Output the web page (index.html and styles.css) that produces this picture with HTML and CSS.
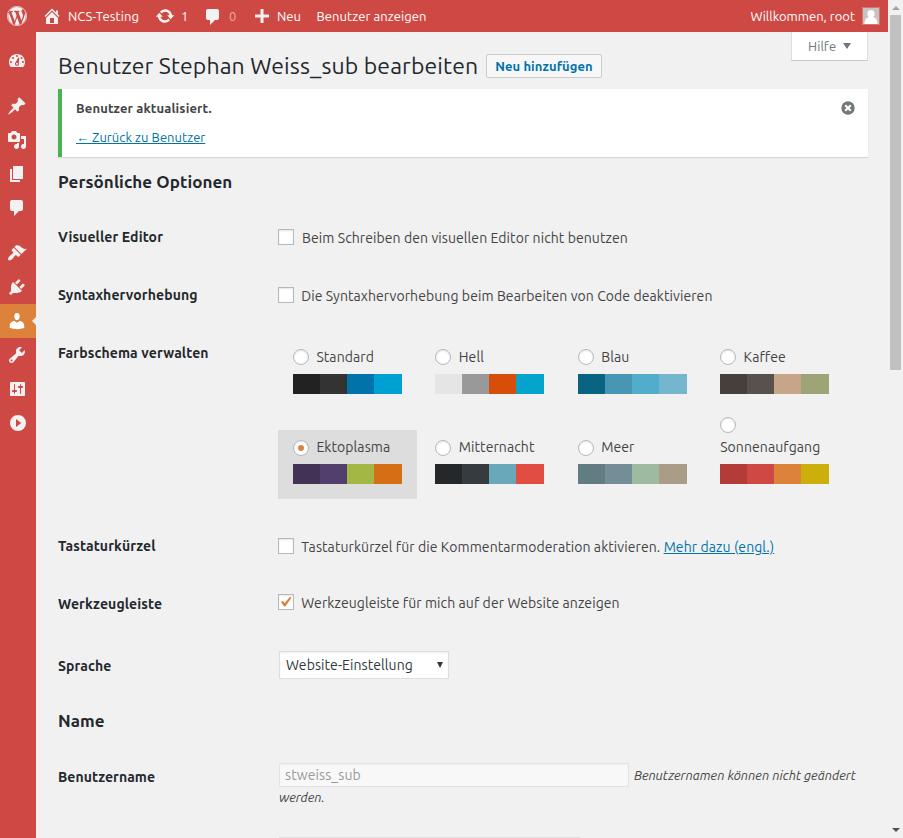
FILE: index.html
```html
<!DOCTYPE html>
<html lang="de">
<head>
<meta charset="utf-8">
<title>Benutzer bearbeiten</title>
<link rel="stylesheet" href="styles.css">
</head>
<body>
<div class="page">
<div class="app">
  <header class="bar">
    <svg class="icon wp" viewBox="0 0 20 20"><circle class="ring" cx="10" cy="10" r="9.650"/><path d="M7.78 15.37L4.37 6.22c.55-.02 1.17-.08 1.17-.08.5-.06.44-1.13-.06-1.11 0 0-1.45.11-2.37.11-.18 0-.37 0-.58-.01C4.12 2.69 6.87 1.11 10 1.11c2.33 0 4.45.87 6.05 2.34-.68-.11-1.65.39-1.65 1.58 0 .74.45 1.36.9 2.1.35.61.55 1.36.55 2.46 0 1.49-1.4 5-1.4 5l-3.03-8.37c.54-.02.82-.17.82-.17.5-.05.44-1.25-.06-1.22 0 0-1.44.12-2.38.12-.87 0-2.33-.12-2.33-.12-.5-.03-.56 1.2-.06 1.22l.92.08 1.26 3.41zM17.41 10c.24-.64.74-1.87.43-4.25.7 1.29 1.05 2.71 1.05 4.25 0 3.29-1.73 6.24-4.4 7.78.97-2.59 1.94-5.2 2.92-7.78zM6.1 18.09C3.12 16.65 1.11 13.53 1.11 10c0-1.3.23-2.48.72-3.59C3.25 10.3 4.67 14.2 6.1 18.09zm4.03-6.63l2.58 6.98c-.86.29-1.76.45-2.71.45-.79 0-1.57-.11-2.29-.33.81-2.38 1.62-4.74 2.42-7.1z"/></svg>
    <a class="site"><svg class="icon" viewBox="0 0 20 20"><path d="M16 8.5l1.53 1.53-1.06 1.06L10 4.6l-6.47 6.49-1.06-1.06L10 2.5l4 4v-2h2v4zm-6-2.46l6 5.99V18H4v-5.97zM12 17v-5H8v5h4z"/></svg><span>NCS-Testing</span></a>
    <a class="updates"><svg class="icon" viewBox="0 0 20 20"><path d="M10.2 3.28c3.53 0 6.43 2.61 6.92 6h2.08l-3.5 4-3.5-4h2.32c-.45-1.97-2.21-3.45-4.32-3.45-1.45 0-2.73.71-3.54 1.78L4.95 5.66C6.23 4.2 8.11 3.28 10.2 3.28zm-.4 13.44c-3.52 0-6.43-2.61-6.92-6H.8l3.5-4c1.17 1.33 2.33 2.67 3.5 4H5.48c.45 1.97 2.21 3.45 4.32 3.45 1.45 0 2.73-.71 3.54-1.78l1.71 1.95c-1.28 1.46-3.15 2.38-5.25 2.38z"/></svg><span>1</span></a>
    <a class="comments"><svg class="icon" viewBox="0 0 20 20"><path d="M5 2h9c1.1 0 2 .9 2 2v7c0 1.1-.9 2-2 2h-2l-5 5v-5H5c-1.1 0-2-.9-2-2V4c0-1.1.9-2 2-2z"/></svg><span class="faded">0</span></a>
    <a class="new"><svg class="icon" viewBox="0 0 20 20"><path d="M17 8.5v3h-5.500v5.500h-3v-5.500H3v-3h5.500V3h3v5.500z"/></svg><span>Neu</span></a>
    <a class="view">Benutzer anzeigen</a>
    <a class="account"><span>Willkommen, root</span><svg class="avatar" viewBox="0 0 18 18"><path class="avatar-bg" d="M0 0h18v18H0z"/><path class="avatar-edge" d="M.5.5h17v17H.5z"/><path class="avatar-person" d="M9 3c2.300 0 3.600 1.600 3.600 3.700 0 1.500-.5 2.700-1.300 3.500 2.500.6 4 2 4.200 6.800H2.500c.2-4.800 1.700-6.200 4.200-6.800-.8-.8-1.300-2-1.300-3.500C5.400 4.600 6.700 3 9 3z"/></svg></a>
  </header>
  <div class="body">
    <nav class="menu">
      <a class="dashboard"><svg class="icon" viewBox="0 0 20 20"><path fill-rule="evenodd" d="M3.760 17h12.480c1.100-1.370 1.760-3.110 1.760-5 0-4.420-3.580-8-8-8s-8 3.580-8 8c0 1.890.66 3.630 1.760 5zM9 6a1 1 0 1 1 2 0 1 1 0 0 1-2 0zM5 8a1 1 0 1 1 2 0 1 1 0 0 1-2 0zm8.500 0a1 1 0 1 1 2 0 1 1 0 0 1-2 0zM3 12a1 1 0 1 1 2 0 1 1 0 0 1-2 0zm12 0a1 1 0 1 1 2 0 1 1 0 0 1-2 0zM11.400 7.500l.9.300-.5 5.100c.8 1.400-.2 2.900-1.800 2.900-1.700 0-2.700-1.800-1.700-3.100zM10 12.800a1 1 0 1 0 0 2 1 1 0 0 0 0-2z"/></svg></a>
      <a class="group"><svg class="icon" viewBox="0 0 20 20"><path d="M10.440 3.020l1.820-1.820 6.360 6.350-1.830 1.820c-1.050-.68-2.480-.57-3.410.36l-.75.75c-.92.93-1.040 2.350-.35 3.410l-1.830 1.820-2.410-2.410-2.800 2.790c-.42.42-3.380 2.710-3.800 2.290s1.860-3.390 2.280-3.810l2.790-2.790L4.100 9.360l1.830-1.820c1.050.69 2.480.57 3.400-.36l.75-.75c.93-.92 1.050-2.350.36-3.410z"/></svg></a>
      <a><svg class="icon" viewBox="0 0 20 20"><path d="M13 11V4c0-.55-.45-1-1-1h-1.670L9 1H5L3.670 3H2c-.55 0-1 .45-1 1v7c0 .55.45 1 1 1h10c.55 0 1-.45 1-1zM7 4.500c1.380 0 2.500 1.120 2.500 2.500S8.380 9.500 7 9.500 4.500 8.380 4.500 7 5.620 4.500 7 4.500zM14 6h5v10.500c0 1.380-1.120 2.500-2.500 2.500S14 17.880 14 16.500s1.120-2.500 2.500-2.500c.17 0 .34.02.5.05V9h-3V6zm-4 8.050V13h2v3.500c0 1.380-1.120 2.500-2.500 2.500S7 17.880 7 16.500 8.120 14 9.500 14c.17 0 .34.02.5.05z"/></svg></a>
      <a><svg class="icon" viewBox="0 0 20 20"><path d="M6 15V2h10v13H6zm-1 1h8v2H3V5h2v11z"/></svg></a>
      <a><svg class="icon" viewBox="0 0 20 20"><path d="M5 2h9c1.100 0 2 .9 2 2v7c0 1.100-.9 2-2 2h-2l-5 5v-5H5c-1.100 0-2-.9-2-2V4c0-1.100.9-2 2-2z"/></svg></a>
      <a class="group"><svg class="icon" viewBox="0 0 20 20"><path d="M14.480 11.060L7.410 3.990l1.500-1.500c.5-.56 2.300-.47 3.510.32 1.210.8 1.430 1.280 2.910 2.100 1.180.64 2.450 1.260 4.450.85zm-.71.71L6.700 4.700 4.930 6.470c-.39.39-.39 1.020 0 1.410l1.060 1.060c.39.39.39 1.030 0 1.420-.6.6-1.430 1.110-2.210 1.690-.35.26-.7.53-1.010.84C1.430 14.230.4 16.080 1.400 17.070c.99 1 2.840-.03 4.180-1.360.31-.31.58-.66.85-1.020.57-.78 1.080-1.610 1.690-2.210.39-.39 1.020-.39 1.410 0l1.060 1.060c.39.39 1.020.39 1.410 0z"/></svg></a>
      <a><svg class="icon" viewBox="0 0 20 20"><path d="M13.110 4.360L9.870 7.600 8 5.730l3.240-3.240c.35-.34 1.050-.2 1.560.32.52.51.66 1.210.31 1.550zm-8 1.770l.91-1.120 9.010 9.010-1.190.84c-.71.71-2.630 1.160-3.820 1.160H6.140L4.900 17.260c-.59.59-1.540.59-2.120 0-.59-.58-.59-1.530 0-2.120l1.240-1.240v-3.880c0-1.130.4-3.190 1.090-3.890zm7.260 3.970l3.240-3.240c.34-.35 1.040-.21 1.550.31.52.51.66 1.210.31 1.550l-3.240 3.250z"/></svg></a>
      <a class="current"><svg class="icon" viewBox="0 0 20 20"><path d="M10 9.250c-2.270 0-2.730-3.440-2.730-3.440C7 4.020 7.820 2 9.970 2c2.160 0 2.980 2.020 2.710 3.810 0 0-.41 3.440-2.680 3.440zm0 2.570L12.720 10c2.390 0 4.520 2.330 4.520 4.530v2.490s-3.650 1.130-7.240 1.130c-3.650 0-7.240-1.130-7.240-1.130v-2.490c0-2.250 1.940-4.480 4.470-4.480z"/></svg></a>
      <a><svg class="icon" viewBox="0 0 20 20"><path d="M16.680 9.770c-1.340 1.340-3.300 1.670-4.950.99l-5.410 6.520c-.99.99-2.590.99-3.580 0s-.99-2.590 0-3.570l6.520-5.420c-.68-1.650-.35-3.610.99-4.950 1.280-1.280 3.120-1.620 4.720-1.060l-2.890 2.890 2.820 2.820 2.860-2.870c.53 1.580.18 3.390-1.080 4.650zM3.810 16.210c.4.39 1.040.39 1.430 0 .4-.4.4-1.040 0-1.430-.39-.4-1.030-.4-1.430 0-.39.39-.39 1.030 0 1.430z"/></svg></a>
      <a><svg class="icon" viewBox="0 0 20 20"><path fill-rule="evenodd" d="M18 16V4c0-.55-.45-1-1-1H4c-.55 0-1 .45-1 1v12c0 .55.45 1 1 1h13c.55 0 1-.45 1-1zM8 11h1c.55 0 1 .45 1 1s-.45 1-1 1H8v1.500c0 .28-.22.5-.5.5s-.5-.22-.5-.5V13H6c-.55 0-1-.45-1-1s.45-1 1-1h1V5.500c0-.28.22-.5.5-.5s.5.22.5.5V11zm5-2h-1c-.55 0-1-.45-1-1s.45-1 1-1h1V5.500c0-.28.22-.5.5-.5s.5.22.5.5V7h1c.55 0 1 .45 1 1s-.45 1-1 1h-1v5.500c0 .28-.22.5-.5.5s-.5-.22-.5-.5V9z"/></svg></a>
      <a><svg class="icon" viewBox="0 0 20 20"><path fill-rule="evenodd" d="M11 2a8 8 0 1 1 0 16 8 8 0 0 1 0-16zM9 6v8l5.300-4z"/></svg></a>
    </nav>
    <main class="content">
      <div class="heading">
        <h1>Benutzer Stephan Weiss_sub bearbeiten</h1>
        <a class="add">Neu hinzufügen</a>
        <a class="help"><span>Hilfe</span><i class="tri"></i></a>
      </div>
      <div class="notice">
        <div><strong>Benutzer aktualisiert.</strong><a class="link">← Zurück zu Benutzer</a></div>
        <svg class="dismiss" viewBox="0 0 14 14"><circle cx="7" cy="7" r="6.700"/><path d="M4.200 4.200l5.600 5.600M9.800 4.200l-5.600 5.600"/></svg>
      </div>
      <h2>Persönliche Optionen</h2>
      <div class="row"><b class="label">Visueller Editor</b><label class="opt wide"><i class="box"></i><span>Beim Schreiben den visuellen Editor nicht benutzen</span></label></div>
      <div class="row"><b class="label">Syntaxhervorhebung</b><label class="opt"><i class="box"></i><span>Die Syntaxhervorhebung beim Bearbeiten von Code deaktivieren</span></label></div>
      <div class="row colors"><b class="label">Farbschema verwalten</b>
        <div class="schemes">
          <div class="scheme"><label><i class="radio"></i><span>Standard</span></label><div class="palette"><i class="c-222"></i><i class="c-333"></i><i class="c-0073aa"></i><i class="c-00a0d2"></i></div></div>
          <div class="scheme"><label><i class="radio"></i><span>Hell</span></label><div class="palette"><i class="c-e5"></i><i class="c-999"></i><i class="c-d64e07"></i><i class="c-04a4cc"></i></div></div>
          <div class="scheme"><label><i class="radio"></i><span>Blau</span></label><div class="palette"><i class="c-096484"></i><i class="c-4796b3"></i><i class="c-52accc"></i><i class="c-74b6ce"></i></div></div>
          <div class="scheme"><label><i class="radio"></i><span>Kaffee</span></label><div class="palette"><i class="c-46403c"></i><i class="c-59524c"></i><i class="c-c7a589"></i><i class="c-9ea476"></i></div></div>
          <div class="scheme lower selected"><label><i class="radio on"></i><span>Ektoplasma</span></label><div class="palette"><i class="c-413256"></i><i class="c-523f6d"></i><i class="c-a3b745"></i><i class="c-d46f15"></i></div></div>
          <div class="scheme lower"><label><i class="radio"></i><span>Mitternacht</span></label><div class="palette"><i class="c-25282b"></i><i class="c-363b3f"></i><i class="c-69a8bb"></i><i class="c-e14d43"></i></div></div>
          <div class="scheme lower"><label><i class="radio"></i><span>Meer</span></label><div class="palette"><i class="c-627c83"></i><i class="c-738e96"></i><i class="c-9ebaa0"></i><i class="c-aa9d88"></i></div></div>
          <div class="scheme stacked"><label><i class="radio"></i><span>Sonnenaufgang</span></label><div class="palette"><i class="c-b43c38"></i><i class="c-cf4944"></i><i class="c-dd823b"></i><i class="c-ccaf0b"></i></div></div>
        </div>
      </div>
      <div class="row"><b class="label">Tastaturkürzel</b><label class="opt"><i class="box"></i><span>Tastaturkürzel für die Kommentarmoderation aktivieren. <a class="link">Mehr dazu (engl.)</a></span></label></div>
      <div class="row toolbar"><b class="label">Werkzeugleiste</b><label class="opt"><i class="box"><svg viewBox="0 0 14 14"><path d="M2 7l1.700-1.300L5.700 8 11 1.700l1.500 1L6.300 11.500H5.100z"/></svg></i><span>Werkzeugleiste für mich auf der Website anzeigen</span></label></div>
      <div class="row language"><b class="label">Sprache</b><div class="select"><span>Website-Einstellung</span><i class="tri"></i></div></div>
      <h2 class="name">Name</h2>
      <div class="row user"><b class="label">Benutzername</b><div class="field"><div class="line"><div class="input">stweiss_sub</div><em>Benutzernamen können nicht geändert</em></div><em class="rest">werden.</em></div></div>
      <div class="next-input"></div>
    </main>
  </div>
</div>
<div class="scroll"><i class="up"></i><i class="thumb"></i><i class="down"></i></div>
</div>
</body>
</html>
```

FILE: styles.css
```css
* { box-sizing: border-box; }
body { margin: 0; background: #f1f1f1; color: #444; font: 14px/20px Ubuntu, "Noto Sans", sans-serif; letter-spacing: .083px; white-space: nowrap; }
i { font-style: normal; }
.page { display: flex; height: 838px; overflow: hidden; }
.app { width: 888px; display: flex; flex-direction: column; }
.icon { width: 20px; height: 20px; flex: none; fill: #f3f1f1; display: block; }
.ring { fill: none; stroke: #f3f1f1; stroke-width: .7; }

.bar { display: flex; align-items: center; height: 32px; background: #cf4944; color: #fff; font-size: 13px; padding-left: 7px; flex: none; }
.bar a { display: flex; align-items: center; }
.site { width: 113px; margin-left: 15px; gap: 6px; }
.updates { width: 48px; gap: 6px; }
.comments { width: 49px; gap: 6px; }
.comments .icon { margin-top: 2px; }
.faded { opacity: .5; }
.new { width: 64.500px; gap: 5px; }
.account { margin-left: auto; gap: 7px; padding-right: 8px; letter-spacing: 0; }
.avatar { width: 18px; height: 18px; }
.avatar-bg { fill: #c4c4c4; }
.avatar-edge { fill: none; stroke: #dc706c; }
.avatar-person { fill: #fff; }

.body { display: flex; flex: 1; min-height: 0; }
.menu { width: 36px; background: #cf4944; padding-top: 12px; flex: none; }
.menu a { display: flex; align-items: center; height: 34px; padding-left: 7px; }
.menu .dashboard { padding-bottom: 2px; }
.menu .group { margin-top: 11px; }
.menu .current { background: #dd823b; justify-content: space-between; }
.menu .current .icon { fill: #fff; }
.current::after { content: ""; border: 4px solid transparent; border-right-color: #f1f1f1; border-left: 0; }

.content { width: 852px; padding: 0 20px 0 22px; height: 806px; overflow: hidden; }
.heading { display: flex; height: 57px; align-items: flex-start; }
h1 { margin: 19px 8px 0 0; width: 420px; font-size: 23px; font-weight: 400; line-height: 30px; color: #23282d; letter-spacing: .12px; }
.add { margin-top: 22px; width: 116px; height: 24px; border: 1px solid #ccc; border-radius: 2px; background: #f7f7f7; color: #0073aa; font-size: 13px; font-weight: 700; line-height: 23px; text-align: center; }
.help { margin-left: auto; width: 77px; height: 29px; background: #fff; border: 1px solid #ddd; border-top: 0; border-bottom-color: #ccc; color: #72777c; font-size: 13px; display: flex; align-items: center; padding-left: 16px; gap: 7px; }
.help .tri { border: 4.500px solid transparent; border-top: 6.500px solid #72777c; border-bottom: 0; }
.notice { height: 68px; width: 810px; border-left: 4px solid #46b450; background: #fff; box-shadow: 0 1px 1px rgba(0,0,0,.1); display: flex; justify-content: space-between; font-size: 13px; padding: 9px 13px 0 14px; }
.notice strong, .notice .link { display: block; }
.notice strong { letter-spacing: .14px; }
.notice .link { margin-top: 9px; letter-spacing: .05px; }
.link { color: #0073aa; text-decoration: underline; }
.dismiss { width: 14px; height: 14px; margin-top: 3px; fill: #72777c; }
.dismiss path { stroke: #fff; stroke-width: 2.200; fill: none; }
h2 { margin: 0; height: 51px; padding-top: 15px; font-size: 17px; line-height: 20px; color: #23282d; letter-spacing: .07px; }
.row { display: flex; align-items: center; height: 58px; }
.label { width: 220px; flex: none; color: #23282d; letter-spacing: .12px; }
.opt { display: flex; align-items: center; gap: 7.300px; }
.wide { gap: 8px; }
.opt span { padding-top: 2px; }
.box { width: 16px; height: 16px; border: 1px solid #b4b9be; background: #fff; box-shadow: inset 0 1px 2px rgba(0,0,0,.1); flex: none; }
.box svg { display: block; width: 14px; height: 14px; fill: #dd823b; }
.colors { height: 193px; align-items: flex-start; }
.colors .label { padding-top: 19px; }
.schemes { display: grid; grid-template-columns: repeat(4, 139px); grid-template-rows: 69px 69px; gap: 21px 3.400px; padding-top: 16px; align-items: end; }
.scheme { height: 69px; padding: 7px 15px 0; }
.scheme label { display: flex; align-items: center; height: 20px; margin-bottom: 7px; gap: 7.400px; }
.lower .radio { margin-top: 2px; }
.selected { background: #ddd; }
.stacked { height: 91px; }
.stacked label { height: 42px; flex-direction: column; align-items: flex-start; gap: 4px; padding-top: 2px; }
.radio { width: 16px; height: 16px; border: 1px solid #b4b9be; border-radius: 50%; background: #fff; box-shadow: inset 0 1px 2px rgba(0,0,0,.1); flex: none; display: flex; align-items: center; justify-content: center; }
.on::after { content: ""; width: 6px; height: 6px; border-radius: 50%; background: #dd823b; }
.palette { display: grid; grid-template-columns: 27px 27px 27px 28px; height: 20px; }
.c-222 { background: #222; } .c-333 { background: #333; } .c-0073aa { background: #0073aa; } .c-00a0d2 { background: #00a0d2; }
.c-e5 { background: #e5e5e5; } .c-999 { background: #999; } .c-d64e07 { background: #d64e07; } .c-04a4cc { background: #04a4cc; }
.c-096484 { background: #096484; } .c-4796b3 { background: #4796b3; } .c-52accc { background: #52accc; } .c-74b6ce { background: #74b6ce; }
.c-46403c { background: #46403c; } .c-59524c { background: #59524c; } .c-c7a589 { background: #c7a589; } .c-9ea476 { background: #9ea476; }
.c-413256 { background: #413256; } .c-523f6d { background: #523f6d; } .c-a3b745 { background: #a3b745; } .c-d46f15 { background: #d46f15; }
.c-25282b { background: #25282b; } .c-363b3f { background: #363b3f; } .c-69a8bb { background: #69a8bb; } .c-e14d43 { background: #e14d43; }
.c-627c83 { background: #627c83; } .c-738e96 { background: #738e96; } .c-9ebaa0 { background: #9ebaa0; } .c-aa9d88 { background: #aa9d88; }
.c-b43c38 { background: #b43c38; } .c-cf4944 { background: #cf4944; } .c-dd823b { background: #dd823b; } .c-ccaf0b { background: #ccaf0b; }
.toolbar { height: 56px; }
.toolbar .label { padding-top: 2px; }
.toolbar .opt { padding-bottom: 2px; }
.language { height: 67px; }
.language .label { padding-top: 2px; }
.select { margin-left: 1px; width: 170px; height: 28px; border: 1px solid #ddd; background: #fff; box-shadow: inset 0 1px 2px rgba(0,0,0,.07); color: #32373c; display: flex; justify-content: space-between; align-items: center; padding: 0 5px 0 6px; }
.select .tri { border: 3px solid transparent; border-top: 6px solid #32373c; border-bottom: 0; }
.name { height: 46px; padding-top: 13px; }
.user { height: 93px; align-items: flex-start; }
.user .label { padding-top: 23px; letter-spacing: .08px; }
.field { padding: 19px 0 0 1px; line-height: 22px; }
.line { display: flex; align-items: center; gap: 5px; height: 24px; }
.input { width: 350px; height: 24px; border: 1px solid #e3e3e3; background: #f8f8f8; box-shadow: inset 0 1px 2px rgba(0,0,0,.04); color: #999; padding-left: 5px; }
.field em { font-size: 13px; letter-spacing: 0; }
.rest { display: block; margin-top: -1px; }
.next-input { margin-left: 221px; width: 301px; height: 20px; border: 1px solid #ddd; background: #fff; }

.scroll { width: 15px; background: #f1f1f1; display: flex; flex-direction: column; align-items: center; }
.up { margin-top: 6px; border: 4px solid transparent; border-bottom-color: #a3a3a3; border-top: 0; }
.thumb { width: 11px; height: 355px; margin-top: 5px; background: #c1c1c1; }
.down { margin: auto 0 6px; border: 4px solid transparent; border-top-color: #505050; border-bottom: 0; }
```
